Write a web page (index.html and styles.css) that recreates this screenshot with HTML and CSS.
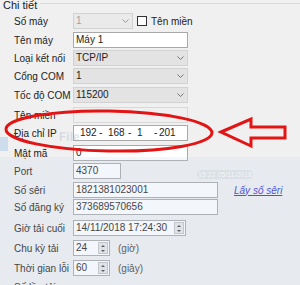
FILE: index.html
```html
<!DOCTYPE html>
<html lang="vi">
<head>
  <meta charset="UTF-8">
  <title>Chi tiết máy</title>
  <link rel="stylesheet" href="styles.css">
</head>
<body>
  <div class="page">
    <!-- Group box -->
    <div class="group-title">
      <span>Chi tiết</span>
      <div class="group-line"></div>
    </div>

    <div class="form">
      <div class="row">
        <label class="lbl">Số máy</label>
        <div class="combo combo-off w-60"><span>1</span><svg class="chev" width="7" height="4" viewBox="0 0 7 4"><path d="M0.5 0.5 L3.5 3.5 L6.5 0.5" fill="none" stroke="#9a9a9a"/></svg></div>
        <span class="check"></span>
        <span class="check-text">Tên miền</span>
      </div>
      <div class="row tight">
        <label class="lbl">Tên máy</label>
        <div class="field w-115">Máy 1</div>
      </div>
      <div class="row tight">
        <label class="lbl">Loại kết nối</label>
        <div class="combo w-115"><span>TCP/IP</span><svg class="chev" width="7" height="4" viewBox="0 0 7 4"><path d="M0.5 0.5 L3.5 3.5 L6.5 0.5" fill="none" stroke="#777"/></svg></div>
      </div>
      <div class="row">
        <label class="lbl">Cổng COM</label>
        <div class="combo w-115"><span>1</span><svg class="chev" width="7" height="4" viewBox="0 0 7 4"><path d="M0.5 0.5 L3.5 3.5 L6.5 0.5" fill="none" stroke="#777"/></svg></div>
      </div>
      <div class="row loose">
        <label class="lbl">Tốc độ COM</label>
        <div class="combo w-115"><span>115200</span><svg class="chev" width="7" height="4" viewBox="0 0 7 4"><path d="M0.5 0.5 L3.5 3.5 L6.5 0.5" fill="none" stroke="#777"/></svg></div>
      </div>
      <div class="row tight">
        <label class="lbl">Tên miền</label>
        <div class="field field-off w-115"></div>
      </div>
      <div class="row loose">
        <label class="lbl">Địa chỉ IP</label>
        <div class="field ip w-115">
          <span class="oct o1">192</span><span class="dot d1">-</span>
          <span class="oct o2">168</span><span class="dot d2">-</span>
          <span class="oct o3">1</span><span class="dot d3">-</span>
          <span class="oct">201</span>
        </div>
      </div>
      <div class="row tight">
        <label class="lbl">Mật mã</label>
        <div class="field w-115">0</div>
      </div>
      <div class="row">
        <label class="lbl">Port</label>
        <div class="field w-48">4370</div>
      </div>
      <div class="row tighter">
        <label class="lbl">Số sêri</label>
        <div class="field w-145">1821381023001</div>
        <a class="link" href="#">Lấy số sêri</a>
      </div>
      <div class="row looser">
        <label class="lbl">Số đăng ký</label>
        <div class="field w-145">373689570656</div>
      </div>
      <div class="row loose">
        <label class="lbl">Giờ tải cuối</label>
        <div class="field spin w-113">
          <span class="spin-val">14/11/2018 17:24:30</span>
          <span class="spin-btn"><i class="up"></i><i class="down"></i></span>
        </div>
      </div>
      <div class="row loose">
        <label class="lbl">Chu kỳ tải</label>
        <div class="field spin w-37">
          <span class="spin-val">24</span>
          <span class="spin-btn"><i class="up"></i><i class="down"></i></span>
        </div>
        <span class="unit">(giờ)</span>
      </div>
      <div class="row">
        <label class="lbl">Thời gian lỗi</label>
        <div class="field spin w-37">
          <span class="spin-val">60</span>
          <span class="spin-btn"><i class="up"></i><i class="down"></i></span>
        </div>
        <span class="unit">(giây)</span>
      </div>
      <div class="row">
        <label class="lbl">Số lần tải</label>
      </div>
    </div>

    <!-- faint window showing through -->
    <div class="ghost"></div>
    <div class="ghost-icon"></div>
    <div class="ghost-text">File</div>
    <div class="ghost-pill">15:22 05/11/2018</div>

    <!-- red annotation -->
    <svg class="mark" width="300" height="285" viewBox="0 0 300 285">
      <ellipse cx="109" cy="131" rx="103" ry="20" transform="rotate(1 109 131)" fill="none" stroke="#e31414" stroke-width="3"/>
      <polygon points="221,132 251,119 251,127 285,127 285,138 251,138 251,146" fill="none" stroke="#e31414" stroke-width="3" stroke-linejoin="miter"/>
    </svg>
  </div>
</body>
</html>
```

FILE: styles.css
```css
body {
  margin: 0;
  background-color: #f0f0f0;
  font-family: "Liberation Sans", Arial, sans-serif;
  font-size: 10px;
  color: #222;
  overflow: hidden;
}
.page {
  position: relative;
  width: 300px;
  height: 285px;
  overflow: hidden;
}
.group-title {
  display: flex;
  height: 11px;
  line-height: 11px;
  padding-left: 3px;
  font-size: 11px;
}
.group-line {
  flex: 1;
  margin: 3px 0 0 3px;
  height: 0;
  border-top: 1px solid #d8d8d8;
}
.form {
  margin-top: 2px;
}
.row {
  display: flex;
  align-items: center;
  height: 16px;
  margin-bottom: 3px;
}
.row.tighter { margin-bottom: 1px; }
.row.tight { margin-bottom: 2px; }
.row.loose { margin-bottom: 4px; }
.row.looser { margin-bottom: 5px; }
.lbl {
  box-sizing: border-box;
  width: 73px;
  padding-left: 14px;
  white-space: nowrap;
}
.field, .combo {
  box-sizing: border-box;
  height: 16px;
  line-height: 14px;
  padding: 0 2px;
  white-space: nowrap;
}
.field {
  background-color: #fff;
  border: 1px solid #a9a9a9;
}
.field-off {
  background-color: #f0f0f0;
  border-color: #d9d9d9;
}
.combo {
  display: flex;
  justify-content: space-between;
  align-items: center;
  background-color: #e3e3e3;
  border: 1px solid #d2d2d2;
}
.combo-off {
  background-color: #eaeaea;
  color: #a2a2a2;
}
.chev {
  margin-right: 1px;
}
.w-37 { width: 37px; }
.w-48 { width: 48px; }
.w-60 { width: 60px; }
.w-113 { width: 113px; }
.w-115 { width: 115px; }
.w-145 { width: 145px; }

.check {
  box-sizing: border-box;
  width: 10px;
  height: 10px;
  margin-left: 4px;
  background: #fff;
  border: 1px solid #333;
}
.check-text {
  margin-left: 4px;
}

.ip {
  display: flex;
  padding-left: 6px;
}
.o1 { width: 19px; }
.o2 { width: 20px; }
.o3 { width: 17px; }
.d1, .d2 { width: 9px; }
.d3 { width: 5px; }

.link {
  margin-left: 16px;
  color: #3434d6;
  font-style: italic;
  text-decoration: underline;
}

.spin {
  display: flex;
  justify-content: space-between;
  align-items: center;
  padding-right: 1px;
}
.spin-btn {
  display: flex;
  flex-direction: column;
  width: 10px;
  height: 12px;
  background: #e6e6e6;
  border: 1px solid #c4c4c4;
  box-sizing: border-box;
}
.spin-btn i {
  flex: 1;
  display: flex;
  justify-content: center;
  align-items: center;
}
.spin-btn i::after {
  content: "";
  border-left: 2px solid transparent;
  border-right: 2px solid transparent;
}
.spin-btn .up::after {
  border-bottom: 2px solid #444;
}
.spin-btn .down::after {
  border-top: 2px solid #444;
}
.unit {
  margin-left: 8px;
  color: #444;
}

/* translucent window behind the screenshot */
.ghost {
  position: absolute;
  top: 157px;
  left: 0;
  right: 0;
  bottom: 0;
  background-color: rgba(195, 210, 232, 0.2);
  pointer-events: none;
}
.ghost-icon {
  position: absolute;
  top: 137px;
  left: 0;
  width: 8px;
  height: 14px;
  background-color: rgba(140, 185, 235, 0.35);
}
.ghost-text {
  position: absolute;
  top: 130px;
  left: 59px;
  font-size: 12px;
  font-weight: bold;
  color: rgba(150, 165, 190, 0.3);
}
.ghost-pill {
  position: absolute;
  top: 170px;
  left: 197px;
  width: 56px;
  height: 9px;
  line-height: 9px;
  border-radius: 5px;
  background-color: rgba(205, 210, 220, 0.45);
  color: rgba(255, 255, 255, 0.7);
  font-size: 7px;
  text-align: center;
}
.mark {
  position: absolute;
  top: 0;
  left: 0;
}
```
